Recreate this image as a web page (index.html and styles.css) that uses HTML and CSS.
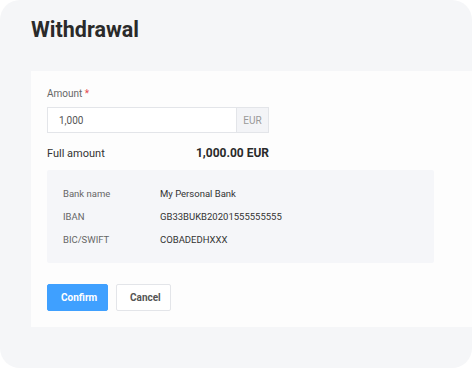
FILE: index.html
```html
<html>
<head>
<meta charset="utf-8">
<link rel="stylesheet" href="styles.css">
</head>
<body>
<div class="frame">
	<h1>Withdrawal</h1>
	<div class="card">
		<div class="form">
			<div class="label">Amount <span class="req">*</span></div>
			<div class="field">
				<input type="text" value="1,000">
				<div class="addon">EUR</div>
			</div>
			<div class="full">
				<span>Full amount</span>
				<b>1,000.00 EUR</b>
			</div>
		</div>
		<div class="bank">
			<div class="row"><span class="key">Bank name</span><span class="val">My Personal Bank</span></div>
			<div class="row"><span class="key">IBAN</span><span class="val">GB33BUKB20201555555555</span></div>
			<div class="row"><span class="key">BIC/SWIFT</span><span class="val">COBADEDHXXX</span></div>
		</div>
		<div class="actions">
			<button class="confirm">Confirm</button>
			<button class="cancel">Cancel</button>
		</div>
	</div>
</div>
</body>
</html>
```

FILE: styles.css
```css
body {
	margin: 0;
	background-color: white;
	font-family: 'Roboto', sans-serif;
	color: #333;
}
.frame {
	width: 472px;
	height: 368px;
	box-sizing: border-box;
	background-color: #f5f6f8;
	border-radius: 20px;
	padding: 15px 0 0 31px;
	overflow: hidden;
}
h1 {
	margin: 0;
	font-size: 21.5px;
	line-height: 30px;
	font-weight: bold;
	color: #2a2a2a;
}
.card {
	margin-top: 26px;
	background-color: #fdfdfd;
	height: 256px;
	box-sizing: border-box;
	padding: 16px 38px 16px 16px;
}
.form {
	width: 222px;
}
.label {
	font-size: 10px;
	color: #666;
	line-height: 13px;
}
.req {
	color: #e5484d;
}
.field {
	display: flex;
	margin-top: 7px;
	height: 26px;
}
.field input {
	flex: 1;
	min-width: 0;
	border: 1px solid #e3e5e9;
	border-right: none;
	background: white;
	padding: 0 11px;
	font-family: 'Roboto', sans-serif;
	font-size: 10px;
	color: #555;
	outline: none;
}
.addon {
	width: 31px;
	border: 1px solid #e3e5e9;
	background-color: #f3f4f7;
	font-size: 10px;
	color: #999;
	display: flex;
	align-items: center;
	justify-content: center;
}
.full {
	display: flex;
	justify-content: space-between;
	align-items: baseline;
	margin-top: 13px;
	font-size: 11px;
	line-height: 14px;
	color: #333;
}
.full b {
	font-size: 12px;
	color: #2a2a2a;
}
.bank {
	margin-top: 9px;
	background-color: #f5f6f9;
	border-radius: 2px;
	padding: 17px 16px 17px;
}
.row {
	display: flex;
	font-size: 9.5px;
	line-height: 13px;
	margin-bottom: 10px;
}
.row:last-child {
	margin-bottom: 0;
}
.key {
	width: 97px;
	color: #666;
}
.val {
	color: #333;
}
.actions {
	display: flex;
	gap: 8px;
	margin-top: 21px;
}
button {
	height: 27px;
	border-radius: 2px;
	font-family: 'Roboto', sans-serif;
	font-size: 10px;
	font-weight: bold;
	padding: 0 13px;
}
.confirm {
	background-color: #3fa0ff;
	border: 1px solid #3fa0ff;
	color: white;
	width: 61px;
}
.cancel {
	background-color: white;
	border: 1px solid #e3e5e9;
	color: #555;
	width: 55px;
}
```
